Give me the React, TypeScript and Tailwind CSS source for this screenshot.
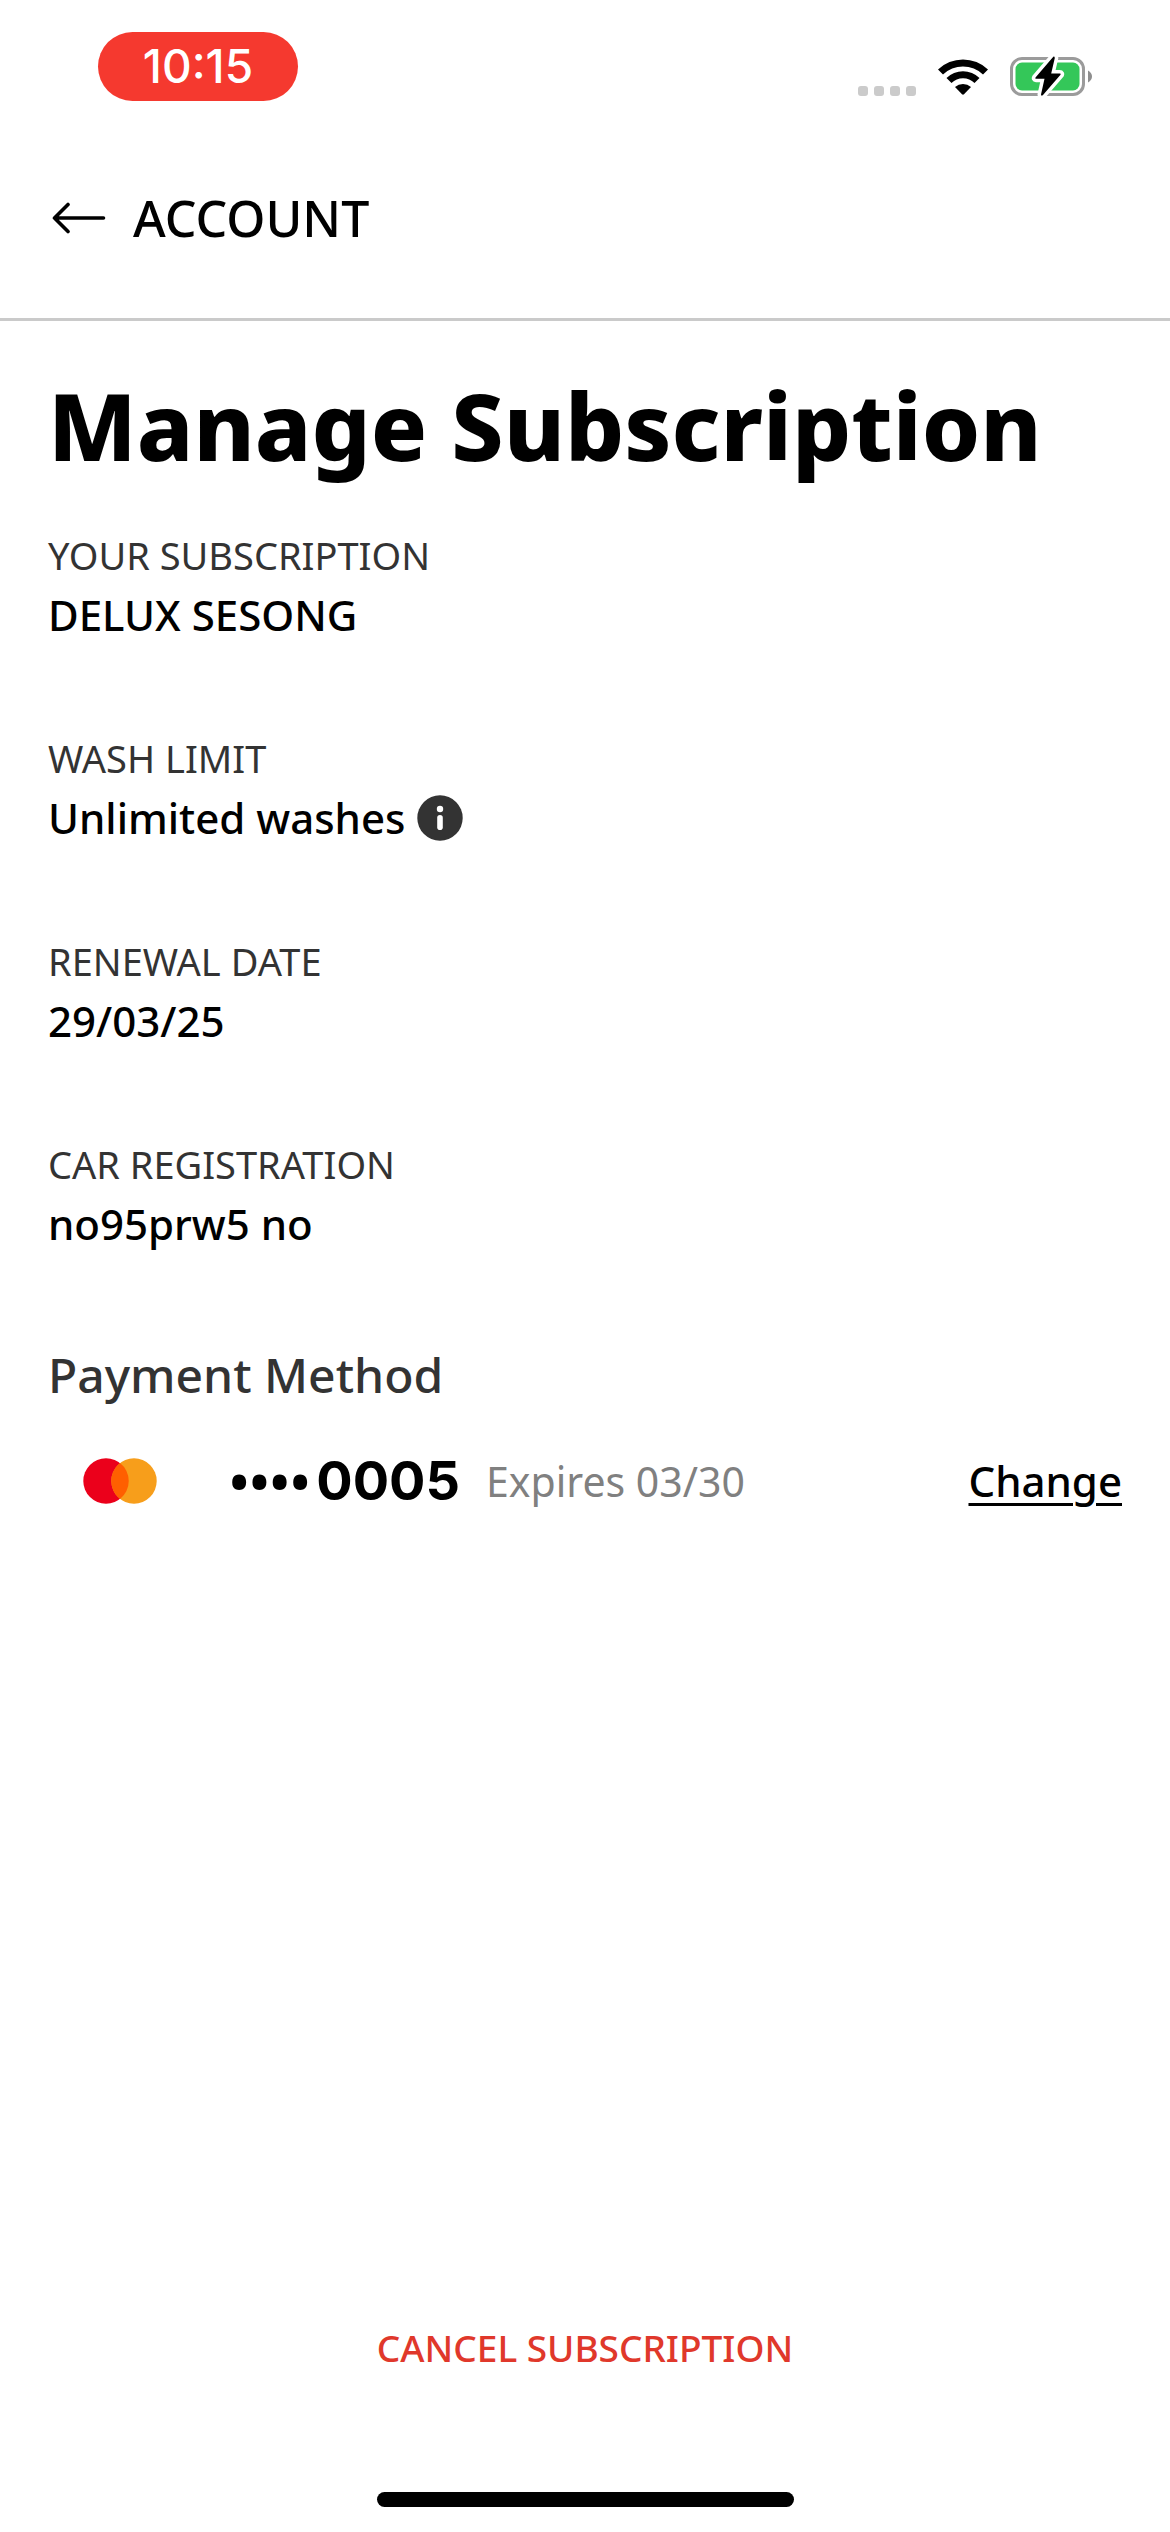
const details = [
  { label: 'YOUR SUBSCRIPTION', value: 'DELUX SESONG' },
  { label: 'WASH LIMIT', value: 'Unlimited washes', info: true },
  { label: 'RENEWAL DATE', value: '29/03/25' },
  { label: 'CAR REGISTRATION', value: 'no95prw5 no' },
];

function WifiIcon() {
  return (
    <svg className="h-[38px] w-[50px]" viewBox="0 0 50 38" aria-hidden="true">
      <path d="M0 11.5A36 36 0 0 1 50 11.5L45 16.5A29 29 0 0 0 5 16.5Z" />
      <path d="M8.5 20A23.5 23.5 0 0 1 41.500 20L36.500 25A16.500 16.500 0 0 0 13.500 25Z" />
      <path d="M17 29A12 12 0 0 1 33 29L26 36.300Q25 37.200 24 36.300Z" />
    </svg>
  );
}

function BatteryIcon() {
  const bolt = 'M43.300 .8L25.500 21.500Q24.800 22.700 26 22.700H34.500L31 38.500Q31.200 40.500 33 39L50.500 18.800Q51.200 17.500 49.800 17.500H41.200L44.800 2Q44.500 0 43.300 .8Z';
  return (
    <svg className="h-[42px] w-[83px]" viewBox="0 0 83 42" aria-hidden="true">
      <rect x="1.500" y="2.500" width="72" height="36" rx="10.500" fill="none" stroke="#9b9b9b" strokeWidth="3" />
      <rect x="5.500" y="6.500" width="64" height="28" rx="6.500" fill="#34c759" />
      <path d="M78 14.500Q82 17 82 20.500T78 26.500Z" fill="#8e8e8e" />
      <path d={bolt} fill="#000" stroke="#fff" strokeWidth="7" strokeLinejoin="round" paintOrder="stroke" />
    </svg>
  );
}

function ArrowIcon() {
  return (
    <svg className="h-[32px] w-[54px]" viewBox="0 0 54 32" fill="none" stroke="currentColor" strokeWidth="3.600" strokeLinecap="round" strokeLinejoin="round" aria-hidden="true">
      <path d="M51.500 16H2.500M16 2.500L2.500 16L16 29.500" />
    </svg>
  );
}

function InfoIcon() {
  return (
    <svg className="h-[46px] w-[46px]" viewBox="0 0 46 46" aria-hidden="true">
      <circle cx="23" cy="23" r="22.700" fill="#333" />
      <circle cx="23" cy="14" r="3.200" fill="#fff" />
      <rect x="20.200" y="20" width="5.600" height="15" rx="2.800" fill="#fff" />
    </svg>
  );
}

function MastercardIcon() {
  return (
    <svg className="h-[46px] w-[74px]" viewBox="0 0 74 46" role="img" aria-label="Mastercard">
      <circle cx="23" cy="23" r="22.700" fill="#eb001b" />
      <circle cx="51" cy="23" r="22.700" fill="#f79e1b" />
      <path d="M37 5.100A22.700 22.700 0 0 1 37 40.900A22.700 22.700 0 0 1 37 5.100Z" fill="#ff5f00" />
    </svg>
  );
}

export default function App() {
  return (
    <div className="flex min-h-screen flex-col bg-white font-['Noto_Sans','Open_Sans',sans-serif] text-black">
      <div className="flex h-[141px] items-start justify-between pt-8 pr-[77px] pl-[98px]">
        <div className="flex h-[69px] w-[200px] items-center justify-center rounded-full bg-[#f5392f] font-['Inter',sans-serif] text-[46px] font-medium text-white">
          10:15
        </div>
        <div className="flex items-center pt-6">
          <div className="mr-[22px] flex gap-[6px] pt-7">
            <span className="size-[10px] rounded-[3px] bg-[#cbcbcb]" />
            <span className="size-[10px] rounded-[3px] bg-[#cbcbcb]" />
            <span className="size-[10px] rounded-[3px] bg-[#cbcbcb]" />
            <span className="size-[10px] rounded-[3px] bg-[#cbcbcb]" />
          </div>
          <WifiIcon />
          <div className="ml-[22px]">
            <BatteryIcon />
          </div>
        </div>
      </div>

      <header className="border-b-[3px] border-[#cacaca] px-12 pt-[45px] pb-[68px]">
        <button className="flex items-center gap-[27px] pl-1 text-[50px] leading-[64px] font-medium">
          <ArrowIcon />
          ACCOUNT
        </button>
      </header>

      <main className="flex grow flex-col px-12 pt-12">
        <h1 className="text-[93px] leading-[112px] font-extrabold">Manage Subscription</h1>

        <dl className="mt-[50px] flex flex-col gap-[89px]">
          {details.map((item) => (
            <div key={item.label} className="flex flex-col gap-[6px]">
              <dt className="text-[38px] leading-[48px] font-normal text-[#333]">{item.label}</dt>
              <dd className="flex items-center gap-3 text-[42px] leading-[60px] font-medium">
                {item.value}
                {item.info && (
                  <button aria-label="About the wash limit">
                    <InfoIcon />
                  </button>
                )}
              </dd>
            </div>
          ))}
        </dl>

        <section className="mt-[89px]">
          <h2 className="text-[48px] leading-[64px] font-medium text-[#333]">Payment Method</h2>
          <div className="mt-[38px] flex items-center pl-[35px]">
            <MastercardIcon />
            <span className="ml-[72px] flex items-center gap-[6px] text-[54px] leading-[72px] font-semibold">
              <span>••••</span>
              <span className="font-['Inter',sans-serif] font-bold">0005</span>
            </span>
            <span className="ml-[26px] text-[41px] leading-[60px] font-normal text-[#808080]">Expires 03/30</span>
            <a href="#change" className="ml-auto text-[42px] leading-[60px] font-medium underline decoration-[3px] underline-offset-[6px]">
              Change
            </a>
          </div>
        </section>

        <button className="mx-auto mt-auto text-[37px] leading-[60px] font-medium text-[#e0382b]">
          CANCEL SUBSCRIPTION
        </button>
      </main>

      <footer className="flex justify-center pt-[114px] pb-[25px]">
        <div className="h-[15px] w-[417px] rounded-full bg-black" />
      </footer>
    </div>
  );
}
